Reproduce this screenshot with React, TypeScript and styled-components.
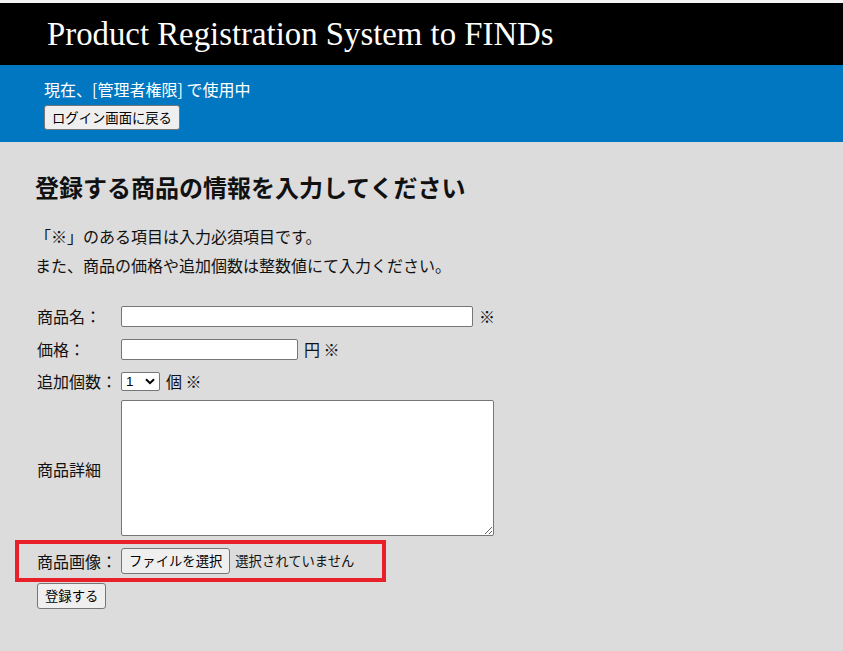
import React from "react";
import styled, { createGlobalStyle } from "styled-components";

const GlobalStyle = createGlobalStyle`
  html, body {
    margin: 0;
    padding: 0;
    background: #dcdcdc;
  }
  body {
    font-family: "Noto Sans CJK JP", "Noto Sans", sans-serif;
    color: #111;
  }
  #root {
    min-height: 100vh;
  }
`;

const jp = `"Noto Sans CJK JP", "Noto Sans", sans-serif`;

const Page = styled.div`
  min-height: 100vh;
  background: #dcdcdc;
  display: flex;
  flex-direction: column;
`;

const Header = styled.header`
  border-top: 3px solid #f4f4f4;
  background: #000;
  height: 62px;
  display: flex;
  align-items: center;
  padding-left: 47px;
`;

const Title = styled.h1`
  margin: 0;
  font-family: "Liberation Serif", "DejaVu Serif", serif;
  font-weight: normal;
  font-size: 32.8px;
  line-height: 40px;
  color: #fff;
`;

const StatusBar = styled.section`
  background: #0077c0;
  padding: 12px 44px 12px;
  display: flex;
  flex-direction: column;
  align-items: flex-start;
`;

const StatusText = styled.div`
  font-family: ${jp};
  font-size: 16px;
  line-height: 24px;
  color: #fff;
`;

const Button = styled.button<{ $mt?: number; $h?: number }>`
  font-family: ${jp};
  font-size: 13.33px;
  line-height: 16px;
  height: ${(p) => p.$h ?? 25}px;
  padding: 0 7px;
  margin: ${(p) => p.$mt ?? 0}px 0 0 0;
  background: #efefef;
  color: #000;
  border: 1px solid #767676;
  border-radius: 3px;
  box-sizing: border-box;
  cursor: default;
  white-space: nowrap;
`;

const Main = styled.main`
  padding: 30px 35px 40px;
  flex: 1;
`;

const Heading = styled.h2`
  margin: 0;
  font-family: ${jp};
  font-size: 24px;
  line-height: 30px;
  font-weight: bold;
  color: #111;
`;

const Notes = styled.div`
  margin-top: 20px;
`;

const Note = styled.p`
  margin: 0;
  font-family: ${jp};
  font-size: 16px;
  line-height: 29px;
  color: #111;
`;

const FormGrid = styled.div`
  margin: 24px 0 0 2px;
  display: grid;
  grid-template-columns: 84px auto;
  grid-template-rows: 24px 24px 22px auto;
  row-gap: 9px;
  align-items: center;
  justify-items: start;
`;

const Label = styled.span`
  font-family: ${jp};
  font-size: 16px;
  line-height: 24px;
  color: #111;
  white-space: nowrap;
`;

const Control = styled.div`
  display: flex;
  align-items: center;
  gap: 6px;
  height: 22px;
`;

const Unit = styled.span`
  font-family: ${jp};
  font-size: 16px;
  line-height: 22px;
  color: #111;
  white-space: nowrap;
`;

const TextInput = styled.input<{ $w: number }>`
  width: ${(p) => p.$w}px;
  height: 21px;
  box-sizing: border-box;
  border: 1px solid #767676;
  border-radius: 2px;
  background: #fff;
  padding: 1px 2px;
  font-size: 13.33px;
  margin: 0;
`;

const SelectWrap = styled.span`
  position: relative;
  display: inline-flex;
`;

const Select = styled.select`
  appearance: none;
  -webkit-appearance: none;
  width: 39px;
  height: 19px;
  box-sizing: border-box;
  border: 1px solid #767676;
  border-radius: 2px;
  background: #fff;
  padding: 0 0 0 4px;
  font-family: "Liberation Sans", Arial, sans-serif;
  font-size: 13.33px;
  line-height: 17px;
  color: #000;
  margin: 0;
`;

const Chevron = styled.svg`
  position: absolute;
  right: 5px;
  top: 6px;
  pointer-events: none;
`;

const TextArea = styled.textarea`
  width: 373px;
  height: 136px;
  box-sizing: border-box;
  border: 1px solid #767676;
  border-radius: 2px;
  background: #fff;
  margin: -1px 0 0 0;
  padding: 2px;
  resize: both;
  display: block;
`;

const FileRow = styled.div`
  margin: 4px 0 0 -20px;
  width: 371px;
  height: 42px;
  box-sizing: border-box;
  border: 4px solid #e8202a;
  padding-left: 18px;
  display: grid;
  grid-template-columns: 84px auto;
  align-items: center;
`;

const FileControl = styled.div`
  display: flex;
  align-items: center;
  gap: 5px;
`;

const FileStatus = styled.span`
  font-family: ${jp};
  font-size: 13.33px;
  line-height: 18px;
  color: #111;
  white-space: nowrap;
`;

const SubmitRow = styled.div`
  display: flex;
  margin: 1px 0 0 2px;
`;

export default function App() {
  return (
    <>
      <GlobalStyle />
      <Page>
        <Header>
          <Title>Product Registration System to FINDs</Title>
        </Header>
        <StatusBar>
          <StatusText>現在、[管理者権限] で使用中</StatusText>
          <Button $mt={4}>ログイン画面に戻る</Button>
        </StatusBar>
        <Main>
          <Heading>登録する商品の情報を入力してください</Heading>
          <Notes>
            <Note>「※」のある項目は入力必須項目です。</Note>
            <Note>また、商品の価格や追加個数は整数値にて入力ください。</Note>
          </Notes>
          <FormGrid>
            <Label>商品名：</Label>
            <Control>
              <TextInput type="text" $w={352} />
              <Unit>※</Unit>
            </Control>

            <Label>価格：</Label>
            <Control>
              <TextInput type="text" $w={177} />
              <Unit>円 ※</Unit>
            </Control>

            <Label>追加個数：</Label>
            <Control>
              <SelectWrap>
                <Select defaultValue="1">
                  <option value="1">1</option>
                  <option value="2">2</option>
                  <option value="3">3</option>
                </Select>
                <Chevron width="10" height="7" viewBox="0 0 10 7">
                  <path d="M1 1.2 L5 5.2 L9 1.2" fill="none" stroke="#000" strokeWidth="2" />
                </Chevron>
              </SelectWrap>
              <Unit>個 ※</Unit>
            </Control>

            <Label>商品詳細</Label>
            <TextArea />
          </FormGrid>
          <FileRow>
            <Label>商品画像：</Label>
            <FileControl>
              <Button type="button" $h={26}>ファイルを選択</Button>
              <FileStatus>選択されていません</FileStatus>
            </FileControl>
          </FileRow>
          <SubmitRow>
            <Button type="button" $h={26}>登録する</Button>
          </SubmitRow>
        </Main>
      </Page>
    </>
  );
}
